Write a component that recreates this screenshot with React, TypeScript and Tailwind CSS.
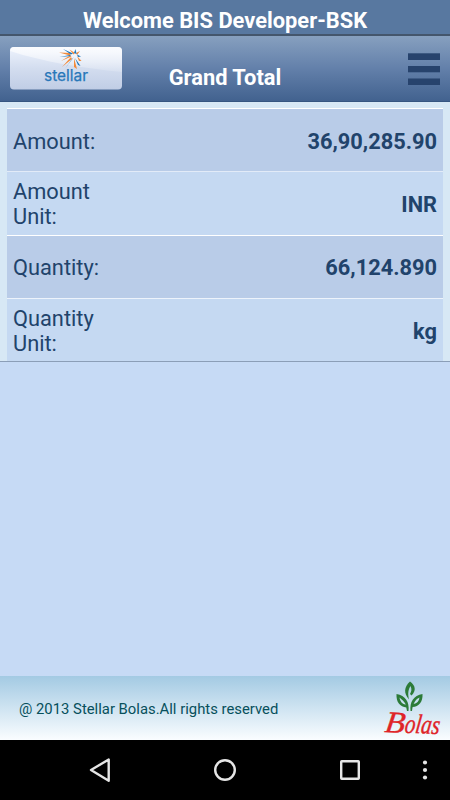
const rows = [
  { label: 'Amount:', value: '36,90,285.90', style: 'h-[63px] pt-[2px] bg-[#b9cce8] border-t-white' },
  { label: 'Amount Unit:', value: 'INR', style: 'h-16 pt-px bg-[#c5d9f2] border-t-[#e2ebf8]' },
  { label: 'Quantity:', value: '66,124.890', style: 'h-[63px] pt-px bg-[#b9cce8] border-t-white' },
  { label: 'Quantity Unit:', value: 'kg', style: 'h-[63px] pt-[2px] bg-[#c5d9f2] border-t-[#edf3fb]' },
];

function StellarLogo() {
  return (
    <svg width="112" height="43" viewBox="0 0 112 43">
      <defs>
        <linearGradient id="plate" x1="0" y1="0" x2="0" y2="1">
          <stop offset="0" stopColor="#eef3fd" />
          <stop offset=".5" stopColor="#d3ddef" />
          <stop offset="1" stopColor="#c0cde5" />
        </linearGradient>
        <linearGradient id="gloss" x1="0" y1="0" x2="0" y2="1">
          <stop offset="0" stopColor="#ffffff" stopOpacity=".75" />
          <stop offset="1" stopColor="#ffffff" stopOpacity=".15" />
        </linearGradient>
      </defs>
      <rect width="112" height="42.500" rx="4" fill="url(#plate)" />
      <path d="M4 0h104q4 0 4 4v21C72 21 34 15 0 4Q0 0 4 0Z" fill="url(#gloss)" />
      <g fill="#f28b3c">
        <path d="M49 5.500 61 6 60 8.500Z" />
        <path d="M51 14 60 8.500 61.500 9.500Z" />
        <path d="M52 20 61 10 62 12Z" />
        <path d="M59.500 2.500 65 6 63.500 7.500Z" />
        <path d="M66 6 70 4 67 8Z" />
        <path d="M67 9 71.500 14 69 14Z" />
        <path d="M64 11 67 22 64 20Z" />
      </g>
      <g fill="#1d77bd">
        <path d="M53 2 63 6.500 61 7.500Z" />
        <path d="M49.500 10 60 8 61 9Z" />
        <path d="M55 21.500 62 12 64 10Z" />
        <path d="M65.500 2 66.500 7 64 6Z" />
        <path d="M67 7.500 71 9.500 68 10Z" />
        <path d="M65 11 70.500 19 68 18Z" />
      </g>
      <text x="34" y="34" textLength="44" lengthAdjust="spacingAndGlyphs" fontFamily="Inter, sans-serif" fontSize="15.500" fill="#2877b9" stroke="#2877b9" strokeWidth=".25">stellar</text>
    </svg>
  );
}

function BolasLogo() {
  return (
    <svg width="64" height="64" viewBox="0 0 64 64">
      <g fill="#2c7b38">
        <path d="M29 5.500C23 11 22.500 17 28 23.500 26.500 17 27.500 13 29.500 10 31 13.500 30.500 15 29 18L30.500 19.500C35.500 14.500 34.500 9.500 29 5.500Z" />
        <path d="M15.500 18C15 26 19 31 25.500 31.500L24.500 28.500C21 28 19 25 18.500 21.500 21.500 24 22.500 25 24.500 28L26 35 27.500 35C28.500 26 24.500 19.500 15.500 18Z" />
        <path d="M41.500 18C42 26 38 30.500 31.500 31L32.500 28C36 27.500 38 25 38.500 21.500 35 23 32 26.500 31 35L29.500 35C28.500 26 32.500 19.500 41.500 18Z" />
      </g>
      <g transform="translate(3 56) rotate(2) skewX(-6)" fontFamily="Liberation Serif, serif" fontStyle="italic" fill="#df2428" stroke="#df2428" strokeWidth=".4">
        <text fontSize="30" textLength="20" lengthAdjust="spacingAndGlyphs">B</text>
        <text x="20" fontSize="27" textLength="35" lengthAdjust="spacingAndGlyphs">olas</text>
      </g>
    </svg>
  );
}

export default function App() {
  return (
    <div className="flex h-[800px] w-[450px] flex-col overflow-hidden bg-[#c6daf5] font-['Roboto',sans-serif]">
      <div className="flex h-9 items-center justify-center border-b-2 border-[#44566c] bg-[#5878a0] pt-[7px]">
        <h1 className="text-[21.85px] leading-none font-bold whitespace-nowrap text-white">Welcome BIS Developer-BSK</h1>
      </div>
      <header className="grid h-[66px] shrink-0 grid-cols-[112px_1fr_112px] border-b border-[#365681] bg-linear-to-b from-[#87a0bf] via-[#6380aa] to-[#42628f] px-[10px] pt-[11px]">
        <StellarLogo />
        <h2 className="pt-[20px] text-center text-[21.85px] leading-none font-bold text-white">Grand Total</h2>
        <svg className="mt-[6px] justify-self-end" width="32" height="33" viewBox="0 0 32 33" fill="#27436d">
          <rect y=".3" width="32" height="6.700" />
          <rect y="13" width="32" height="6.300" />
          <rect y="25.500" width="32" height="6.500" />
        </svg>
      </header>
      <main className="flex-1">
        <div className="border-b border-[#8b9eb7] bg-[#d7e8f5] px-[7px] pt-[6px]">
          {rows.map((row) => (
            <div key={row.label} className={`flex items-center justify-between border-t px-[6px] text-[21.8px] leading-[25px] text-[#21436b] ${row.style}`}>
              <span className="w-[90px]">{row.label}</span>
              <span className="font-bold">{row.value}</span>
            </div>
          ))}
        </div>
      </main>
      <footer className="flex h-16 items-center justify-between bg-linear-to-b from-[#a3cae3] to-[#fafdff] pr-[5px] pl-[19px]">
        <span className="pt-[2px] text-[14.85px] text-[#07505c]">@ 2013 Stellar Bolas.All rights reserved</span>
        <BolasLogo />
      </footer>
      <nav className="h-[60px] bg-black">
        <svg width="450" height="60" viewBox="0 0 450 60" fill="none" stroke="#e5e5e5" strokeWidth="2.4">
          <path d="M108.7 19.5v21.3L91 30Z" strokeLinejoin="round" />
          <circle cx="225" cy="30" r="9.8" />
          <rect x="341.2" y="21.2" width="17.6" height="17.6" rx=".5" />
          <g fill="#e5e5e5" stroke="none">
            <circle cx="425" cy="22.5" r="2.1" />
            <circle cx="425" cy="30" r="2.1" />
            <circle cx="425" cy="37.5" r="2.1" />
          </g>
        </svg>
      </nav>
    </div>
  );
}
